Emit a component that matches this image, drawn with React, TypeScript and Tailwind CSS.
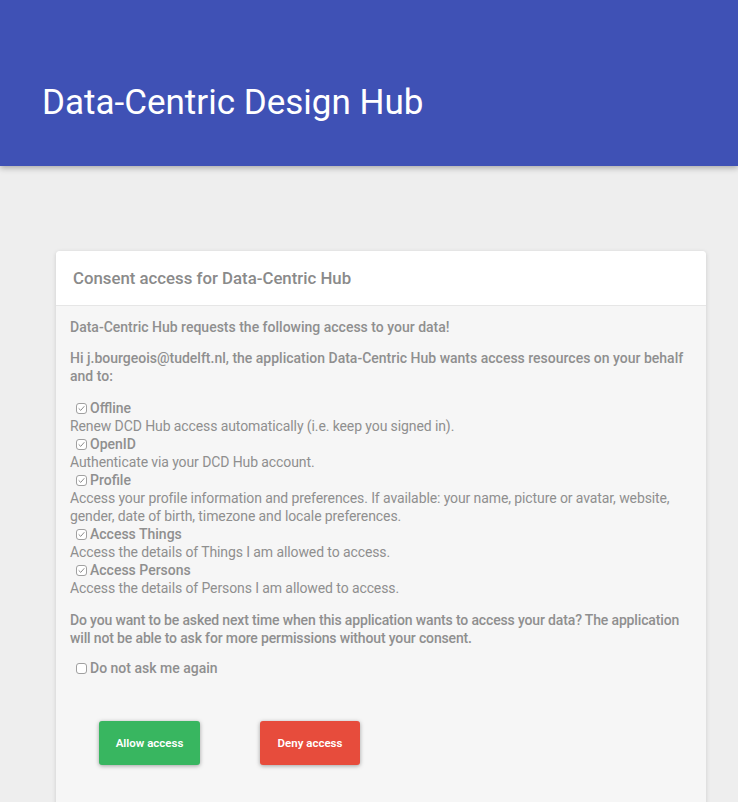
import React from 'react';

// ------------------------------------------------------------------ scopes --

const SCOPES = [
  { name: 'Offline', desc: 'Renew DCD Hub access automatically (i.e. keep you signed in).' },
  { name: 'OpenID', desc: 'Authenticate via your DCD Hub account.' },
  {
    name: 'Profile',
    desc: 'Access your profile information and preferences. If available: your name, picture or avatar, website, gender, date of birth, timezone and locale preferences.',
  },
  { name: 'Access Things', desc: 'Access the details of Things I am allowed to access.' },
  { name: 'Access Persons', desc: 'Access the details of Persons I am allowed to access.' },
];

function Box({ checked }: { checked: boolean }) {
  return (
    <span className="inline-flex h-[11px] w-[11px] shrink-0 items-center justify-center rounded-[3px] border border-[#a0a0a0] bg-white">
      {checked && (
        <svg viewBox="0 0 12 12" className="h-[9px] w-[9px]">
          <path d="M2.6 6.2 L5 8.5 L9.4 3.4" fill="none" stroke="#8a8a8a" strokeWidth="1.3" strokeLinecap="round" strokeLinejoin="round" />
        </svg>
      )}
    </span>
  );
}

// ---------------------------------------------------------------- component --

export default function App() {
  return (
    <div className="min-h-screen bg-[#eeeeee] font-['Roboto','Liberation_Sans',sans-serif]">
      {/* Top bar */}
      <header className="h-[166px] bg-[#3f51b5] px-[42px] pt-[83px] shadow-[0_2px_6px_rgba(0,0,0,0.3)]">
        <h1 className="text-[35px] leading-[40px] font-normal text-white">Data-Centric Design Hub</h1>
      </header>

      <main className="px-[56px] pt-[85px]">
        <div className="w-[650px] overflow-hidden rounded-[4px] bg-[#f6f6f6] shadow-[0_1px_4px_rgba(0,0,0,0.15)]">
          <div className="flex h-[55px] items-center border-b border-[#e6e6e6] bg-white px-[17px] pt-[2px]">
            <h2 className="text-[16.8px] font-medium text-[#8a8a8a]">Consent access for Data-Centric Hub</h2>
          </div>

          <div className="px-[14px] pt-[12px] pb-[64px] text-[14px] leading-[18px] text-[#8f8f8f]">
            <p className="font-medium">Data-Centric Hub requests the following access to your data!</p>
            <p className="mt-[13px] font-medium">
              Hi j.bourgeois@tudelft.nl, the application Data-Centric Hub wants access resources on your behalf and to:
            </p>

            <ul className="mt-[14px]">
              {SCOPES.map((s) => (
                <li key={s.name}>
                  <label className="flex items-center gap-[3px] pl-[6px] font-medium">
                    <Box checked />
                    {s.name}
                  </label>
                  <div className="tracking-[-0.1px]">{s.desc}</div>
                </li>
              ))}
            </ul>

            <p className="mt-[14px] font-medium tracking-[-0.15px]">
              Do you want to be asked next time when this application wants to access your data? The application
              will not be able to ask for more permissions without your consent.
            </p>

            <label className="mt-[12px] flex items-center gap-[3px] pl-[6px] font-medium">
              <Box checked={false} />
              Do not ask me again
            </label>

            <div className="mt-[44px] flex gap-[60px] pl-[29px]">
              <button className="h-[44px] w-[101px] rounded-[3px] bg-[#38b660] text-[11.5px] font-semibold text-white shadow-[0_1px_4px_rgba(0,0,0,0.35)]">
                Allow access
              </button>
              <button className="h-[44px] w-[100px] rounded-[3px] bg-[#e74c3c] text-[11.5px] font-semibold text-white shadow-[0_1px_4px_rgba(0,0,0,0.35)]">
                Deny access
              </button>
            </div>
          </div>
        </div>
      </main>
    </div>
  );
}
